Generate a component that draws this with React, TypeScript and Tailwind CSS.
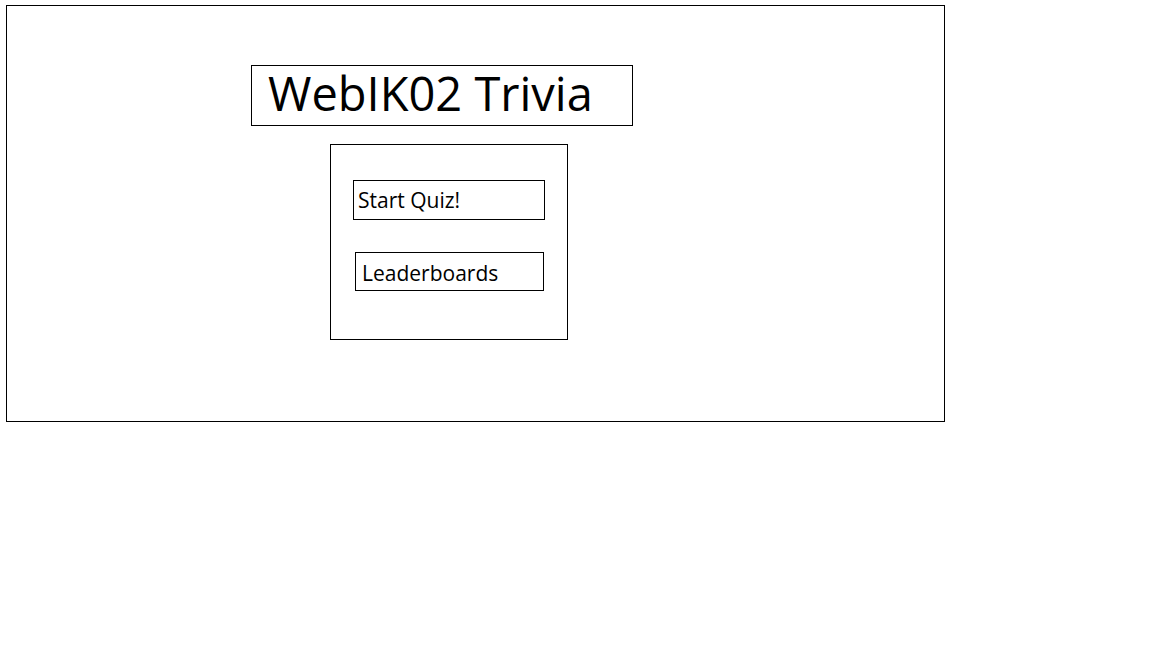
const App = () => {
  return (
    <div className="min-h-screen bg-white pl-[6px] pt-[5px] font-['Open_Sans',sans-serif] text-black">
      {/* Frame */}
      <div className="w-[939px] h-[417px] border border-black pl-[244px] pt-[59px]">
        {/* Title */}
        <div className="w-[382px] h-[61px] border border-black pl-[16px] pb-[4px] flex items-center">
          <h1 className="text-[47px] leading-none">WebIK02 Trivia</h1>
        </div>

        {/* Menu */}
        <div className="ml-[79px] mt-[18px] w-[238px] h-[196px] border border-black pt-[35px]">
          <button className="ml-[22px] w-[192px] h-[40px] border border-black pl-[4px] pt-[1px] flex items-center text-[21px] leading-none">
            Start Quiz!
          </button>
          <button className="ml-[24px] mt-[32px] w-[189px] h-[39px] border border-black pl-[6px] pt-[3px] flex items-center text-[21px] leading-none">
            Leaderboards
          </button>
        </div>
      </div>
    </div>
  );
};

export default App;
